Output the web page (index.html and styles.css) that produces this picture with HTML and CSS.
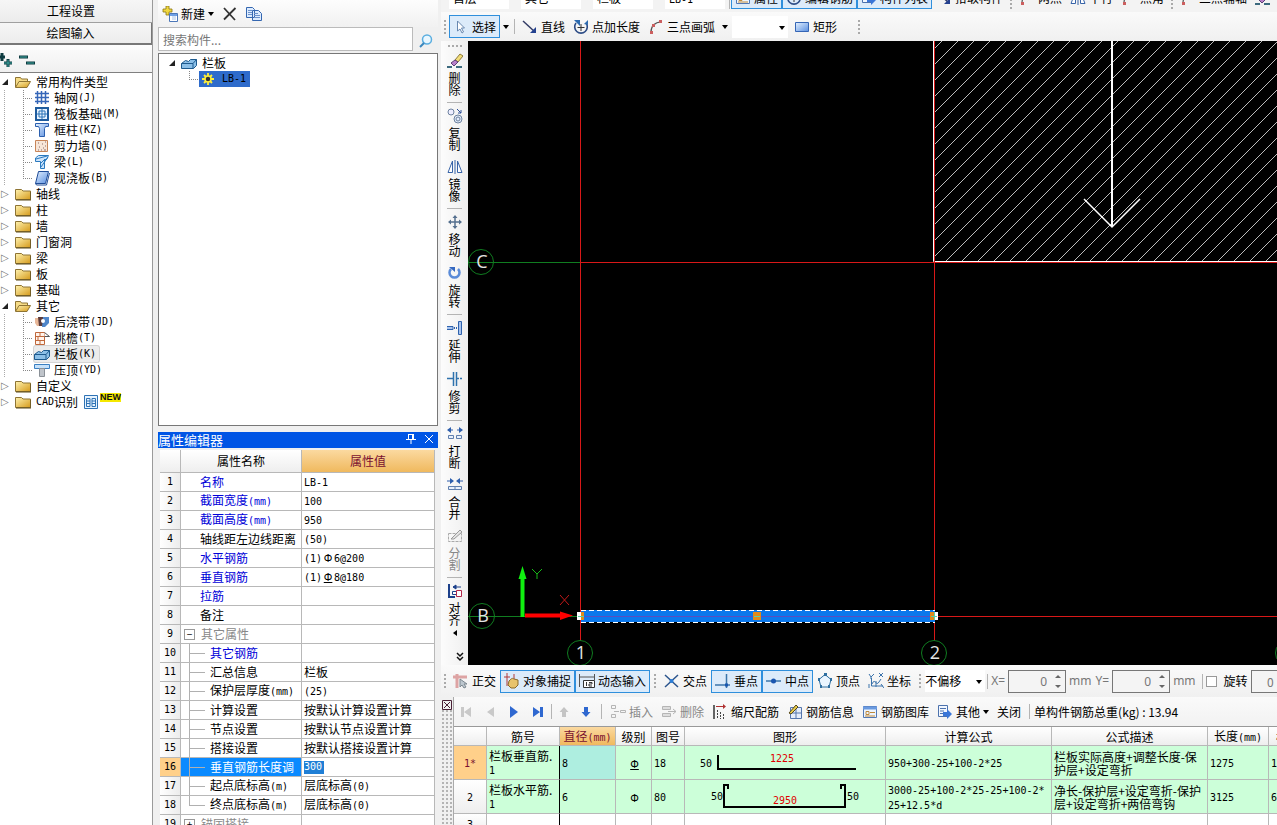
FILE: index.html
```html
<!doctype html>
<html lang="zh-CN">
  <head>
    <meta charset="UTF-8" />
    <meta name="viewport" content="width=device-width, initial-scale=1.0" />
    <title>绘图输入</title>
    <link rel="stylesheet" href="styles.css">
  </head>
  <body>
    <!-- icon sprite -->
    <svg class="sprite" width="0" height="0" aria-hidden="true">
      <defs>
        <linearGradient id="gold" x1="0" y1="0" x2="1" y2="1">
          <stop offset="0" stop-color="#fff3b0" />
          <stop offset="1" stop-color="#d59a1c" />
        </linearGradient>
        <linearGradient id="sky" x1="0" y1="0" x2="1" y2="1">
          <stop offset="0" stop-color="#e4f1ff" />
          <stop offset="1" stop-color="#5a8fe0" />
        </linearGradient>
        <symbol id="i-folder" viewBox="0 0 16 16">
          <path d="M.5 3.500h6l1.500 1.500h7.500v8.500h-15z" fill="url(#gold)" stroke="#8e7434" />
          <path d="M1 14h15V6" fill="none" stroke="#5d4a18" />
        </symbol>
        <symbol id="i-folder-open" viewBox="0 0 16 16">
          <path d="M.5 13V3.500h5l1 1.500h6v3" fill="#f6dc88" stroke="#8e7434" />
          <path d="M.5 13.500 4 7.500h11.500l-3.500 6z" fill="url(#gold)" stroke="#8e7434" />
        </symbol>
        <symbol id="i-grid" viewBox="0 0 16 16">
          <path d="M3.500 1v13M7.500 1v13M11.500 1v13M1 3.500h14M1 7.500h14M1 11.500h14" stroke="#3566b8" stroke-width="1.500" />
        </symbol>
        <symbol id="i-raft" viewBox="0 0 16 16">
          <path d="M2 2h12v12H2z" fill="#e8f3ff" stroke="#1f5c9e" stroke-width="2" />
          <path d="M5 5h6v6H5zM8 3v10M3 8h10" fill="none" stroke="#2d74b8" />
        </symbol>
        <symbol id="i-column" viewBox="0 0 16 16">
          <path d="M1.500 1.500h13v3h-3l-1 2v8h-5v-8l-1-2h-3z" fill="url(#sky)" stroke="#2b5fae" />
        </symbol>
        <symbol id="i-wall" viewBox="0 0 16 16">
          <path d="M1.500 2.500h12v11h-12z" fill="#f7e6d8" stroke="#c88558" />
          <path d="M4 5h1M8 6h1M11 4h1M5 9h1M9 10h1M11 8h1M4 12h1M7 12h1M10 12h2" stroke="#8a6a6a" />
        </symbol>
        <symbol id="i-beam" viewBox="0 0 16 16">
          <path d="m1.500 4 3-2.500h10l-2 4h-2v9h-4v-7h-5z" fill="#cfe5fb" stroke="#2b7abf" />
          <path d="m2 5 11-3M7 13l7-10M7 9l4-4" stroke="#2b7abf" />
        </symbol>
        <symbol id="i-slab" viewBox="0 0 16 16">
          <path d="M4.500 1.500h10l-3 12h-10z" fill="url(#sky)" stroke="#1f4c97" />
          <path d="m1.500 13.500 1 1.500h10l3-12" fill="none" stroke="#1f4c97" />
        </symbol>
        <symbol id="i-strip" viewBox="0 0 16 16">
          <path d="M1 4h5v8H3L1 9z" fill="#e9b99a" />
          <path d="M4 3h5v9H5z" fill="#5b3b3b" />
          <path d="M9 3h6v6l-4 4H8z" fill="#4f86c9" />
          <circle cx="9" cy="7" r="2" fill="#fff" />
        </symbol>
        <symbol id="i-eave" viewBox="0 0 16 16">
          <path d="M1.500 2.500h9v12h-9zM1.500 6.500h9M1.500 10.500h9M6 2.500v4M4 6.500v4M6 10.500v4" fill="#fff4ec" stroke="#c0683c" />
          <path d="m10.500 2.500 5 4h-5" fill="#fff" stroke="#555" />
        </symbol>
        <symbol id="i-rail" viewBox="0 0 16 16">
          <path d="m.5 8.500 4-3 3 1 2-2h6v6l-3 3h-12z" fill="#8cc0e8" stroke="#1d5a8e" />
          <path d="M.5 8.500h11.500l3.500-4M12 8.500v5" fill="none" stroke="#1d5a8e" />
        </symbol>
        <symbol id="i-coping" viewBox="0 0 16 16">
          <path d="M.5 2.500h15v4H.5z" fill="#c5e1fa" stroke="#3a7fc1" />
          <path d="M5.500 6.500h5v8h-5z" fill="#bfc4ca" stroke="#8a9097" />
        </symbol>
        <symbol id="i-cad" viewBox="0 0 16 16">
          <path d="M1.500 1.500h13v13h-13z" fill="#e8f4ff" stroke="#2f73b5" />
          <path d="M3.500 4.500h3.500v8h-3.500zM9 4.500h3.500v8H9zM3.500 7H7M9 7h3.500M3.500 9.500H7M9 9.500h3.500" fill="none" stroke="#2f73b5" />
        </symbol>
        <symbol id="i-new" viewBox="0 0 16 16">
          <path d="M4 0h3v3h3v3H7v3H4V6H1V3h3z" fill="#f1d840" stroke="#8c7712" stroke-width=".8" />
          <path d="M7.500 7.500h8v8h-8z" fill="#fff" stroke="#4c77b8" />
          <path d="M8 9h7" stroke="#6fa0e6" stroke-width="2" />
          <path d="M10 11h4M10 13h4" stroke="#a9c4ea" />
        </symbol>
        <symbol id="i-delete" viewBox="0 0 16 16">
          <path d="m2 2 11 12M13.500 2 2 13.500" stroke="#333" stroke-width="1.800" />
        </symbol>
        <symbol id="i-copy" viewBox="0 0 16 16">
          <path d="M.5 1.500h6l2 2v8h-8zM6.500 4.500h6l3 3v7h-9z" fill="#dcebff" stroke="#3567b0" />
          <path d="M2 4.500h4M2 6.500h4M2 8.500h4M8 7.500h4M8 9.500h6M8 11.500h6" stroke="#6d93cc" />
        </symbol>
        <symbol id="i-search" viewBox="0 0 16 16">
          <circle cx="9" cy="6.500" r="4.500" fill="#e9f7ff" stroke="#5aaee0" stroke-width="1.500" />
          <path d="m6 10-4 4" stroke="#3b87bd" stroke-width="2" />
        </symbol>
        <symbol id="i-gear" viewBox="0 0 16 16">
          <path d="M8 2v12M2 8h12M4 4l8 8M12 4l-8 8" stroke="#ffef3a" stroke-width="1.800" />
          <circle cx="8" cy="8" r="3" fill="#333" stroke="#ffef3a" stroke-width="1.500" />
        </symbol>
        <symbol id="i-cursor" viewBox="0 0 16 16">
          <path d="M4.500 2v10l2.500-2 2 4 1.500-1-2-4h3z" fill="#fff" stroke="#6888b0" />
        </symbol>
        <symbol id="i-line" viewBox="0 0 16 16">
          <path d="m1 2 12 11" stroke="#333c66" stroke-width="1.500" />
          <path d="M14 8v6H8z" fill="#24418f" />
        </symbol>
        <symbol id="i-length" viewBox="0 0 16 16">
          <path d="M3 4a6.300 6.300 0 1 0 10 0" fill="none" stroke="#2d4c86" stroke-width="1.600" />
          <path d="M8 5v7M4.500 8.500h7" stroke="#333" />
          <path d="M1 1h6v6zM15 1v5l-4-1z" fill="#2d6bb0" />
        </symbol>
        <symbol id="i-arc" viewBox="0 0 16 16">
          <path d="M3 13C3 7 7 3 13 3" fill="none" stroke="#555" stroke-width="1.200" />
          <path d="M2 12h3v3H2zM4 5h3v3H4zM11 1h3v3h-3z" fill="#cb5f5f" />
        </symbol>
        <symbol id="i-rect" viewBox="0 0 16 16">
          <path d="M1.500 3.500h13v9h-13z" fill="url(#sky)" stroke="#3565b5" />
        </symbol>
        <symbol id="i-erase" viewBox="0 0 16 16">
          <path d="m8 7 5-6 3 2-5 6z" fill="#f2dc78" stroke="#8d7a38" />
          <path d="m4 10 4-3 3 2-4 4z" fill="#b87fc9" stroke="#5b3f74" />
          <path d="M0 14h5M9 14h6" stroke="#3c6a7e" stroke-width="2" />
        </symbol>
        <symbol id="i-dup" viewBox="0 0 16 16">
          <circle cx="4" cy="4" r="3" fill="#eef" stroke="#6f83a0" />
          <circle cx="11" cy="11" r="4" fill="#e3ecfa" stroke="#6f83a0" />
          <circle cx="11" cy="11" r="2" fill="none" stroke="#6f83a0" />
          <path d="m10 1 4 4M14 2v3h-3" fill="none" stroke="#2d4f98" />
        </symbol>
        <symbol id="i-mirror" viewBox="0 0 16 16">
          <path d="M5.500 2v11.500H1zM10.500 2v11.500H15z" fill="#fff" stroke="#3864a8" />
          <path d="M8 1v14" stroke="#3864a8" />
        </symbol>
        <symbol id="i-move" viewBox="0 0 16 16">
          <path d="M8 2v12M2 8h12" stroke="#55708f" stroke-width="1.500" />
          <path d="m8 1 2.500 3h-5zM8 15l2.500-3h-5zM1 8l3-2.500v5zM15 8l-3-2.500v5z" fill="#55708f" />
        </symbol>
        <symbol id="i-rotate" viewBox="0 0 16 16">
          <path d="M11 4a5 5 0 1 1-7 0" fill="none" stroke="#5a8bd8" stroke-width="2.500" />
          <path d="M2 2h6v5z" fill="#3468c0" />
        </symbol>
        <symbol id="i-extend" viewBox="0 0 16 16">
          <path d="M0 6.500h6v3H0M11.500 1.500h3v13h-3z" fill="#a9c4ee" stroke="#2e62ad" />
          <path d="M7 8h4" stroke="#2e62ad" stroke-width="2" stroke-dasharray="1 1" />
        </symbol>
        <symbol id="i-trim" viewBox="0 0 16 16">
          <path d="M6.500 1v14M9.500 1v14M0 7.500h6M10 7.500h2M13 7.500h2" stroke="#2e72ad" stroke-width="1.500" />
        </symbol>
        <symbol id="i-break" viewBox="0 0 16 16">
          <path d="M1 4h5M10 4h5" stroke="#2e5fad" />
          <path d="M0 4l4-3v6zM16 4l-4-3v6z" fill="#2e5fad" />
          <path d="M1.500 9.500h5v3h-5zM9.500 9.500h5v3h-5z" fill="#e8f0fc" stroke="#5f7fae" />
        </symbol>
        <symbol id="i-merge" viewBox="0 0 16 16">
          <path d="M0 4h5M11 4h5" stroke="#2e5fad" />
          <path d="M7 4 3 1v6zM9 4l4-3v6z" fill="#2e5fad" />
          <path d="M1.500 9.500h13v3h-13zM8 9.500v3" fill="#e8f0fc" stroke="#5f7fae" />
        </symbol>
        <symbol id="i-split" viewBox="0 0 16 16">
          <path d="M1.500 5.500h13v8h-13z" fill="none" stroke="#aaa" stroke-dasharray="3 1" />
          <path d="m4 11 9-9 2 2-8 7z" fill="#e5e5e5" stroke="#999" />
        </symbol>
        <symbol id="i-align" viewBox="0 0 16 16">
          <path d="M2 1v14M2 14h6" stroke="#1d418b" stroke-width="2" />
          <path d="M5.500 8.500h4v3h-4z" fill="#fff" stroke="#1d418b" />
          <path d="M9.500 7.500h5v6h-5z" fill="#fff" stroke="#b3264a" />
          <path d="M6 4h8M6 4l3-2v4z" stroke="#1d418b" fill="#1d418b" />
        </symbol>
        <symbol id="i-ortho" viewBox="0 0 16 16">
          <path d="M4 1v14M0 4h14" stroke="#dda3a3" stroke-width="3" />
          <path d="M7 6v8l2-2 2 3 2-1-2-3h3z" fill="#bdc7cf" stroke="#7d8890" />
        </symbol>
        <symbol id="i-snap" viewBox="0 0 16 16">
          <path d="M3 0v13M0 4h6M10 1v5" stroke="#b03a3a" />
          <path d="M5 8c3-3 3-3 5-2l4 1v5l-3 3H7l-3-3z" fill="#e8c36c" stroke="#8b6a2a" />
        </symbol>
        <symbol id="i-dyn" viewBox="0 0 16 16">
          <path d="M.5 1v13M15.500 1v6M1 4h14" stroke="#555" />
          <path d="M4.500 7.500h11v7h-11z" fill="#fff" stroke="#333" />
          <path d="M7.500 9v4M10 9.500h3V11h-3v2h3" fill="none" stroke="#333" />
        </symbol>
        <symbol id="i-cross" viewBox="0 0 16 16">
          <path d="m1 2 13 12M14 2 1 14" stroke="#2b548c" stroke-width="1.500" />
          <circle cx="7.500" cy="8" r="2" fill="#2c7fd9" />
        </symbol>
        <symbol id="i-perp" viewBox="0 0 16 16">
          <path d="M0 12h15M11.500 1v14" stroke="#3b76aa" stroke-width="1.500" />
          <path d="M10 10.500h3v3h-3z" fill="#1956b0" />
        </symbol>
        <symbol id="i-mid" viewBox="0 0 16 16">
          <path d="M0 8h15" stroke="#3b76aa" stroke-width="1.500" />
          <circle cx="7.500" cy="8" r="2.500" fill="#1956b0" />
        </symbol>
        <symbol id="i-vertex" viewBox="0 0 16 16">
          <path d="m8 1.500 6 5-2 7.500H4L2 6.500z" fill="#eaf5ff" stroke="#2f6fa0" />
          <path d="M7 0h3v3H7zM1 5h2v3H1zM13 5h2v3h-2zM3 12h2v3H3zM11 12h2v3h-2z" fill="#2f6fa0" />
        </symbol>
        <symbol id="i-coord" viewBox="0 0 16 16">
          <path d="M3.500 5v8H15M4 11c3-7 4 3 7-2l2-3" fill="none" stroke="#3a72ab" />
          <path d="m1 1 2 3 3-3M3 4v2M11 0l4 4M15 0l-4 4M1 11v4M13 11l3 4M8 8v6" fill="none" stroke="#3a72ab" />
        </symbol>
        <symbol id="i-first" viewBox="0 0 16 16"><path d="M3 3h3v10H3zM13 3v10L6 8z" fill="#c9c9c9" /></symbol>
        <symbol id="i-prev" viewBox="0 0 16 16"><path d="M12 3v10L5 8z" fill="#c9c9c9" /></symbol>
        <symbol id="i-next" viewBox="0 0 16 16"><path d="M4 2v12l8-6z" fill="#2f68d0" /></symbol>
        <symbol id="i-last" viewBox="0 0 16 16"><path d="M3 3v10l7-5zM10 3h3v10h-3z" fill="#2f68d0" /></symbol>
        <symbol id="i-up" viewBox="0 0 16 16"><path d="m8 3 4.500 5H10v5H6V8H3.500z" fill="#c4c4c4" /></symbol>
        <symbol id="i-down" viewBox="0 0 16 16"><path d="m8 13 4.500-5H10V3H6v5H3.500z" fill="#2f68d0" /></symbol>
        <symbol id="i-insert" viewBox="0 0 16 16">
          <path d="M1.500 1.500h4v3h-4zM1.500 10.500h4v3h-4zM10.500 6.500h5v2h-5zM4 7.500h5" fill="none" stroke="#b5b5b5" />
        </symbol>
        <symbol id="i-remove" viewBox="0 0 16 16">
          <path d="M1.500 2.500h8v3h-8zM1.500 9.500h8v3h-8z" fill="#ddd" stroke="#b5b5b5" />
          <path d="M7 7.500h8M12 5l3 2.500-3 2.500" fill="none" stroke="#b5b5b5" />
        </symbol>
        <symbol id="i-scale" viewBox="0 0 16 16">
          <path d="M4 2.500h8" stroke="#b03030" />
          <path d="m11 0 3 2.500L11 5z" fill="#b03030" />
          <path d="M2 1v14" stroke="#333" stroke-width="1.500" />
          <path d="M5.500 6v9M8.500 8v7M11.500 10v5" stroke="#444" stroke-dasharray="2 1" />
        </symbol>
        <symbol id="i-info" viewBox="0 0 16 16">
          <path d="M3.500 3.500h11v11h-11zM3.500 9h11M9 3.500v11" fill="#e5edfb" stroke="#5576ad" />
          <path d="m2 9 7-8 2 2-7 7z" fill="#e5c94b" stroke="#584a1a" />
        </symbol>
        <symbol id="i-lib" viewBox="0 0 16 16">
          <path d="M1.500 2.500h13v11h-13z" fill="#edf5ff" stroke="#5278b4" />
          <path d="M1 4h14" stroke="#6a9ae0" stroke-width="3" />
          <path d="M4 7.500h3v3H4zM8 8.500h5M3 12h10" fill="none" stroke="#c08a3a" />
        </symbol>
        <symbol id="i-other" viewBox="0 0 16 16">
          <path d="M1.500 1.500h9v11h-9zM3 4.500h6M3 7h4M3 9.500h3" fill="#f2f7ff" stroke="#4d72ad" />
          <path d="M6 8h4V5l5 5-5 5v-3H6z" fill="#3a76d8" />
        </symbol>
        <symbol id="i-more" viewBox="0 0 16 16">
          <path d="m5 4 3 3 3-3M5 8l3 3 3-3" fill="none" stroke="#111" stroke-width="1.500" />
        </symbol>
      </defs>
    </svg>

    <div class="app">
      <aside class="nav">
        <button class="nav-tab">工程设置</button>
        <button class="nav-tab current">绘图输入</button>
        <div class="nav-tools">
          <svg width="36" height="16" aria-hidden="true">
            <path d="M-2 4h7M2 0v8M4 10h8M8 6v8M19 4h9M26 10h9" stroke="#0d3b40" stroke-width="3" />
            <path d="M4 10h8M8 7v7M20 4h7M27 10h7" stroke="#3fa7a0" />
          </svg>
        </div>
        <ul class="tree">
          <li class="open"><a href="#"><svg class="icon"><use href="#i-folder-open" /></svg>常用构件类型</a>
            <ul>
              <li><a href="#"><svg class="icon"><use href="#i-grid" /></svg>轴网<span class="n">(J)</span></a></li>
              <li><a href="#"><svg class="icon"><use href="#i-raft" /></svg>筏板基础<span class="n">(M)</span></a></li>
              <li><a href="#"><svg class="icon"><use href="#i-column" /></svg>框柱<span class="n">(KZ)</span></a></li>
              <li><a href="#"><svg class="icon"><use href="#i-wall" /></svg>剪力墙<span class="n">(Q)</span></a></li>
              <li><a href="#"><svg class="icon"><use href="#i-beam" /></svg>梁<span class="n">(L)</span></a></li>
              <li><a href="#"><svg class="icon"><use href="#i-slab" /></svg>现浇板<span class="n">(B)</span></a></li>
            </ul>
          </li>
          <li><a href="#"><svg class="icon"><use href="#i-folder" /></svg>轴线</a></li>
          <li><a href="#"><svg class="icon"><use href="#i-folder" /></svg>柱</a></li>
          <li><a href="#"><svg class="icon"><use href="#i-folder" /></svg>墙</a></li>
          <li><a href="#"><svg class="icon"><use href="#i-folder" /></svg>门窗洞</a></li>
          <li><a href="#"><svg class="icon"><use href="#i-folder" /></svg>梁</a></li>
          <li><a href="#"><svg class="icon"><use href="#i-folder" /></svg>板</a></li>
          <li><a href="#"><svg class="icon"><use href="#i-folder" /></svg>基础</a></li>
          <li class="open"><a href="#"><svg class="icon"><use href="#i-folder-open" /></svg>其它</a>
            <ul>
              <li><a href="#"><svg class="icon"><use href="#i-strip" /></svg>后浇带<span class="n">(JD)</span></a></li>
              <li><a href="#"><svg class="icon"><use href="#i-eave" /></svg>挑檐<span class="n">(T)</span></a></li>
              <li><a href="#" class="current"><svg class="icon"><use href="#i-rail" /></svg>栏板<span class="n">(K)</span></a></li>
              <li><a href="#"><svg class="icon"><use href="#i-coping" /></svg>压顶<span class="n">(YD)</span></a></li>
            </ul>
          </li>
          <li><a href="#"><svg class="icon"><use href="#i-folder" /></svg>自定义</a></li>
          <li><a href="#"><svg class="icon"><use href="#i-folder" /></svg><span class="n">CAD</span>识别<svg class="icon cad"><use href="#i-cad" /></svg><em class="new">NEW</em></a></li>
        </ul>
      </aside>

      <section class="side">
        <div class="side-tools">
          <button class="tool"><svg class="icon"><use href="#i-new" /></svg>新建<i class="caret"></i></button>
          <button class="tool" aria-label="删除"><svg class="icon"><use href="#i-delete" /></svg></button>
          <button class="tool" aria-label="复制"><svg class="icon"><use href="#i-copy" /></svg></button>
        </div>
        <div class="search">
          <input type="text" placeholder="搜索构件..." aria-label="搜索构件">
          <button aria-label="搜索"><svg class="icon"><use href="#i-search" /></svg></button>
        </div>
        <div class="members">
          <ul class="tree">
            <li class="open"><a href="#"><svg class="icon"><use href="#i-rail" /></svg>栏板</a>
              <ul>
                <li><a href="#" class="selected"><svg class="icon"><use href="#i-gear" /></svg><span class="n">LB-1</span></a></li>
              </ul>
            </li>
          </ul>
        </div>

        <div class="editor">
          <header class="editor-title">
            <h2>属性编辑器</h2>
            <button aria-label="固定"><svg width="12" height="12"><path d="M3.500 1v5M8.500 1v5M3 1.500h6M1 6.500h10M6 7v4M7.500 1v5" stroke="#fff" fill="none" /></svg></button>
            <button aria-label="关闭"><svg width="12" height="12"><path d="m2 2 8 8M10 2l-8 8" stroke="#fff" /></svg></button>
          </header>
          <table class="props">
            <colgroup><col class="p-no"><col class="p-name"><col></colgroup>
            <thead>
              <tr><th></th><th>属性名称</th><th class="hot">属性值</th></tr>
            </thead>
            <tbody>
              <tr><th>1</th><td class="link">名称</td><td><span class="n">LB-1</span></td></tr>
              <tr><th>2</th><td class="link">截面宽度<span class="n">(mm)</span></td><td><span class="n">100</span></td></tr>
              <tr><th>3</th><td class="link">截面高度<span class="n">(mm)</span></td><td><span class="n">950</span></td></tr>
              <tr><th>4</th><td>轴线距左边线距离</td><td><span class="n">(50)</span></td></tr>
              <tr><th>5</th><td class="link">水平钢筋</td><td><span class="n">(1)<b class="bar">Ф</b>6@200</span></td></tr>
              <tr><th>6</th><td class="link">垂直钢筋</td><td><span class="n">(1)<b class="bar hrb">Ф</b>8@180</span></td></tr>
              <tr><th>7</th><td class="link">拉筋</td><td></td></tr>
              <tr><th>8</th><td>备注</td><td></td></tr>
              <tr class="group"><th>9</th><td><button class="fold" aria-label="折叠">−</button>其它属性</td><td></td></tr>
              <tr class="sub"><th>10</th><td class="link">其它钢筋</td><td></td></tr>
              <tr class="sub"><th>11</th><td>汇总信息</td><td>栏板</td></tr>
              <tr class="sub"><th>12</th><td>保护层厚度<span class="n">(mm)</span></td><td><span class="n">(25)</span></td></tr>
              <tr class="sub"><th>13</th><td>计算设置</td><td>按默认计算设置计算</td></tr>
              <tr class="sub"><th>14</th><td>节点设置</td><td>按默认节点设置计算</td></tr>
              <tr class="sub"><th>15</th><td>搭接设置</td><td>按默认搭接设置计算</td></tr>
              <tr class="sub active"><th>16</th><td>垂直钢筋长度调</td><td><input type="text" value="300" aria-label="垂直钢筋长度调整"></td></tr>
              <tr class="sub"><th>17</th><td>起点底标高<span class="n">(m)</span></td><td>层底标高<span class="n">(0)</span></td></tr>
              <tr class="sub last"><th>18</th><td>终点底标高<span class="n">(m)</span></td><td>层底标高<span class="n">(0)</span></td></tr>
              <tr class="group"><th>19</th><td><button class="fold" aria-label="展开">+</button>锚固搭接</td><td></td></tr>
            </tbody>
          </table>
        </div>
      </section>

      <main class="work">
        <div class="bar-row clipped">
          <span class="combo-text">首层</span>
          <span class="combo-text">其它</span>
          <span class="combo-text">栏板</span>
          <span class="combo-text"><span class="n">LB-1</span></span>
          <i class="sep"></i>
          <button class="tool on"><svg class="icon"><use href="#i-lib" /></svg>属性</button>
          <button class="tool on"><svg class="icon"><use href="#i-length" /></svg>编辑钢筋</button>
          <button class="tool on"><svg class="icon"><use href="#i-other" /></svg>构件列表</button>
          <button class="tool"><svg class="icon"><use href="#i-line" /></svg>拾取构件</button>
          <i class="grip"></i>
          <button class="tool"><svg class="icon"><use href="#i-arc" /></svg>两点</button>
          <button class="tool"><svg class="icon"><use href="#i-mirror" /></svg>平行</button>
          <button class="tool"><svg class="icon"><use href="#i-arc" /></svg>点角</button>
          <i class="grip"></i>
          <button class="tool"><svg class="icon"><use href="#i-arc" /></svg>三点辅轴</button>
          <button class="tool" aria-label="删除辅轴"><svg class="icon"><use href="#i-erase" /></svg></button>
        </div>
        <div class="bar-row draw-tools">
          <i class="grip"></i>
          <button class="tool on"><svg class="icon"><use href="#i-cursor" /></svg>选择</button>
          <button class="drop" aria-label="更多"><i class="caret"></i></button>
          <i class="sep"></i>
          <button class="tool"><svg class="icon"><use href="#i-line" /></svg>直线</button>
          <button class="tool"><svg class="icon"><use href="#i-length" /></svg>点加长度</button>
          <button class="tool"><svg class="icon"><use href="#i-arc" /></svg>三点画弧</button>
          <button class="drop" aria-label="更多"><i class="caret"></i></button>
          <span class="combo"><select aria-label="画法"><option></option></select><i class="caret"></i></span>
          <button class="tool"><svg class="icon"><use href="#i-rect" /></svg>矩形</button>
          <i class="grip end"></i>
        </div>

        <div class="stage">
          <div class="edit-tools">
            <i class="grip-h"></i>
            <button class="vtool"><svg class="icon"><use href="#i-erase" /></svg>删除</button>
            <i class="hsep"></i>
            <button class="vtool"><svg class="icon"><use href="#i-dup" /></svg>复制</button>
            <button class="vtool"><svg class="icon"><use href="#i-mirror" /></svg>镜像</button>
            <i class="hsep"></i>
            <button class="vtool"><svg class="icon"><use href="#i-move" /></svg>移动</button>
            <button class="vtool"><svg class="icon"><use href="#i-rotate" /></svg>旋转</button>
            <i class="hsep"></i>
            <button class="vtool"><svg class="icon"><use href="#i-extend" /></svg>延伸</button>
            <button class="vtool"><svg class="icon"><use href="#i-trim" /></svg>修剪</button>
            <i class="hsep"></i>
            <button class="vtool"><svg class="icon"><use href="#i-break" /></svg>打断</button>
            <button class="vtool"><svg class="icon"><use href="#i-merge" /></svg>合并</button>
            <button class="vtool" disabled><svg class="icon"><use href="#i-split" /></svg>分割</button>
            <i class="hsep"></i>
            <button class="vtool"><svg class="icon"><use href="#i-align" /></svg>对齐</button>
            <i class="caret left"></i>
            <button class="more" aria-label="更多"><svg class="icon"><use href="#i-more" /></svg></button>
          </div>

          <svg class="canvas" role="img" aria-label="平面图">
            <defs>
              <pattern id="hatch" width="16" height="16" patternUnits="userSpaceOnUse">
                <path d="M10 0 0 10M16 10l-6 6" stroke="#bbb" shape-rendering="crispEdges" />
              </pattern>
            </defs>
            <rect x="466" y="0" width="1000" height="221" fill="url(#hatch)" />
            <g fill="none" stroke="#fff">
              <path d="M465.500 0v220.500h1000" />
              <path d="M644 0v185" stroke-width="2" />
              <path d="m616 158 28 28 28-28" stroke-width="1.500" />
            </g>
            <g fill="none" stroke="#d81818">
              <path d="M112.500 0v600M466.500 0v600M112 221.500h1400M467 575.500h1000" />
            </g>
            <g fill="none" stroke="#107c20">
              <path d="M0 221.500h112M0 575.500h112" />
              <circle cx="13" cy="221" r="12.500" />
              <circle cx="14" cy="575" r="12.500" />
              <circle cx="112" cy="612" r="12.500" />
              <circle cx="466" cy="612" r="12.500" />
              <circle cx="820" cy="612" r="12.500" />
            </g>
            <rect x="113" y="569" width="354" height="12" fill="#0b78ec" />
            <path d="M113 569.500h354M113 581.500h354" stroke="#fff" stroke-dasharray="5 3" />
            <path d="M113 575.500h354" stroke="#5a4fc0" />
            <path d="M109 571h4v8h-4zM467 571h3v8h-3z" fill="#fff" />
            <path d="M113 571h3v8h-3zM285 571h8v8h-8zM462 571h4v8h-4z" fill="#e08a1c" />
            <path d="M110 575.500h6M286 575.500h6M463 575.500h6M466.500 571v8" stroke="#58d0a8" />
            <path d="M54.500 576V536" stroke="#10f010" stroke-width="4" />
            <path d="m54.500 525 4 13h-8z" fill="#10f010" />
            <path d="M57 574.500h38" stroke="#f00" stroke-width="4" />
            <path d="m105 574.500-13-4v8.500z" fill="#f00" />
            <path d="m64 528 5 5 5-5M69 533v5" fill="none" stroke="#18b818" />
            <path d="m92 554 9 10M101 554l-9 10" stroke="#c01818" />
            <g class="axis-label">
              <text x="14" y="227">C</text>
              <text x="15" y="581">B</text>
              <text x="113" y="618">1</text>
              <text x="467" y="618">2</text>
            </g>
          </svg>
        </div>

        <div class="bar-row snap-tools">
          <i class="grip"></i>
          <button class="tool"><svg class="icon"><use href="#i-ortho" /></svg>正交</button>
          <button class="tool on"><svg class="icon"><use href="#i-snap" /></svg>对象捕捉</button>
          <button class="tool on"><svg class="icon"><use href="#i-dyn" /></svg>动态输入</button>
          <i class="grip mid"></i>
          <button class="tool"><svg class="icon"><use href="#i-cross" /></svg>交点</button>
          <button class="tool on"><svg class="icon"><use href="#i-perp" /></svg>垂点</button>
          <button class="tool on"><svg class="icon"><use href="#i-mid" /></svg>中点</button>
          <button class="tool"><svg class="icon"><use href="#i-vertex" /></svg>顶点</button>
          <button class="tool"><svg class="icon"><use href="#i-coord" /></svg>坐标</button>
          <i class="grip mid"></i>
          <span class="combo"><select aria-label="偏移方式"><option>不偏移</option></select><i class="caret"></i></span>
          <i class="sep"></i>
          <label class="coord">X=<span class="spin"><input type="text" value="0"><i></i></span>mm</label>
          <label class="coord">Y=<span class="spin"><input type="text" value="0"><i></i></span>mm</label>
          <i class="sep"></i>
          <label class="rotate"><input type="checkbox">旋转</label>
          <span class="spin angle"><input type="text" value="0" aria-label="旋转角度"><i></i></span>
        </div>

        <div class="rebar">
          <div class="dock"><button aria-label="关闭面板"><svg width="10" height="10"><path d="M.5.5h9v9h-9zM2 2l6 6M8 2 2 8" fill="none" stroke="#4a2035" /></svg></button></div>
          <div class="rebar-main">
            <div class="rebar-tools">
              <button class="tool" disabled aria-label="首条"><svg class="icon"><use href="#i-first" /></svg></button>
              <button class="tool" disabled aria-label="上一条"><svg class="icon"><use href="#i-prev" /></svg></button>
              <button class="tool" aria-label="下一条"><svg class="icon"><use href="#i-next" /></svg></button>
              <button class="tool" aria-label="末条"><svg class="icon"><use href="#i-last" /></svg></button>
              <i class="sep tight"></i>
              <button class="tool step" disabled aria-label="上移"><svg class="icon"><use href="#i-up" /></svg></button>
              <button class="tool step" aria-label="下移"><svg class="icon"><use href="#i-down" /></svg></button>
              <i class="sep"></i>
              <button class="tool" disabled><svg class="icon"><use href="#i-insert" /></svg>插入</button>
              <button class="tool" disabled><svg class="icon"><use href="#i-remove" /></svg>删除</button>
              <button class="tool"><svg class="icon"><use href="#i-scale" /></svg>缩尺配筋</button>
              <button class="tool"><svg class="icon"><use href="#i-info" /></svg>钢筋信息</button>
              <button class="tool"><svg class="icon"><use href="#i-lib" /></svg>钢筋图库</button>
              <button class="tool"><svg class="icon"><use href="#i-other" /></svg>其他<i class="caret"></i></button>
              <button class="tool">关闭</button>
              <i class="sep"></i>
              <span class="total">单构件钢筋总重(kg) : 13.94</span>
            </div>
            <div class="sheet">
              <table class="bars">
                <colgroup>
                  <col class="c-no"><col class="c-name"><col class="c-dia"><col class="c-grade"><col class="c-fig">
                  <col class="c-shape"><col class="c-formula"><col class="c-desc"><col class="c-len"><col class="c-count">
                </colgroup>
                <thead>
                  <tr>
                    <th></th><th>筋号</th><th class="hot">直径<span class="n">(mm)</span></th><th>级别</th><th>图号</th>
                    <th>图形</th><th>计算公式</th><th>公式描述</th><th>长度<span class="n">(mm)</span></th><th class="cut">根数</th>
                  </tr>
                </thead>
                <tbody>
                  <tr class="data current">
                    <th><span class="n">1*</span></th>
                    <td>栏板垂直筋.<br><span class="n">1</span></td>
                    <td class="cell-on"><span class="n">8</span></td>
                    <td class="mid"><b class="bar hrb">Ф</b></td>
                    <td><span class="n">18</span></td>
                    <td class="shape">
                      <svg width="200" height="33">
                        <path d="M33 9v14h138" fill="none" stroke="#000" stroke-width="2" />
                        <text x="15" y="21">50</text>
                        <text x="85" y="16" class="red">1225</text>
                      </svg>
                    </td>
                    <td><span class="n">950+300-25+100-2*25</span></td>
                    <td>栏板实际高度+调整长度-保<br>护层+设定弯折</td>
                    <td><span class="n">1275</span></td>
                    <td><span class="n">1</span></td>
                  </tr>
                  <tr class="data">
                    <th><span class="n">2</span></th>
                    <td>栏板水平筋.<br><span class="n">1</span></td>
                    <td><span class="n">6</span></td>
                    <td class="mid"><b class="bar">Ф</b></td>
                    <td><span class="n">80</span></td>
                    <td class="shape">
                      <svg width="200" height="33">
                        <path d="M43 9V5h-4v22h121V5h-4v4" fill="none" stroke="#000" stroke-width="2" />
                        <text x="26" y="20">50</text>
                        <text x="88" y="24" class="red">2950</text>
                        <text x="162" y="20">50</text>
                      </svg>
                    </td>
                    <td><span class="n">3000-25+100-2*25-25+100-2*<br>25+12.5*d</span></td>
                    <td>净长-保护层+设定弯折-保护<br>层+设定弯折+两倍弯钩</td>
                    <td><span class="n">3125</span></td>
                    <td><span class="n">6</span></td>
                  </tr>
                  <tr>
                    <th><span class="n">3</span></th>
                    <td></td><td></td><td></td><td></td><td></td><td></td><td></td><td></td><td></td>
                  </tr>
                </tbody>
              </table>
            </div>
          </div>
        </div>
      </main>
    </div>
  </body>
</html>
```

FILE: styles.css
```css
* {
  box-sizing: border-box;
}
body {
  margin: 0;
  background: #f0f0f0;
  color: #000;
  font-family: "Noto Sans CJK SC", "Liberation Sans", sans-serif;
  font-size: 12px;
  line-height: 16px;
}
button,
input,
select {
  font: inherit;
  color: inherit;
  margin: 0;
  padding: 0;
  border: 0;
  background: none;
}
ul {
  list-style: none;
  margin: 0;
  padding: 0;
}
a {
  color: inherit;
  text-decoration: none;
}
table {
  border-collapse: separate;
  border-spacing: 0;
  table-layout: fixed;
}
.sprite {
  position: absolute;
}
.icon {
  width: 16px;
  height: 16px;
  flex: none;
}
/* narrow latin and digits next to the chinese text */
.n {
  font-family: "DejaVu Sans Mono", monospace;
  font-size: 10px;
}
.app {
  display: flex;
  height: 100vh;
  overflow: hidden;
}

/* left navigation */
.nav {
  flex: 0 0 153px;
  display: flex;
  flex-direction: column;
  margin-right: 5px;
  border-right: 1px solid #9a9a9a;
  background: #f4f4f4;
}
.nav-tab {
  height: 23px;
  padding-right: 10px;
  border-bottom: 1px solid #a0a0a0;
  background: linear-gradient(#f6f6f6, #ececec);
}
.nav-tab.current {
  height: 22px;
  border-bottom: 2px solid #777;
  border-right: 1px solid #777;
}
.nav-tools {
  height: 27px;
  padding-top: 8px;
  background: linear-gradient(#fcfcfc, #f0f0f0);
}
.nav > .tree {
  flex: 1;
  padding-top: 1px;
  border-top: 1px solid #808080;
  background: #fff;
}

.tree > li {
  position: relative;
  padding-left: 15px;
}
.tree a {
  display: flex;
  align-items: center;
  gap: 5px;
  width: fit-content;
  height: 16px;
  white-space: nowrap;
}
.tree a .n {
  margin-left: -4px;
}
.tree > li::before {
  content: "▷";
  position: absolute;
  left: 1px;
  top: 0;
  color: #777;
  font: 10px/16px "DejaVu Sans", sans-serif;
}
.tree > li.open::before {
  content: "";
  border-bottom: 6px solid #222;
  border-left: 6px solid transparent;
  top: 5px;
  left: 2px;
}
.nav .tree > li.open {
  background: repeating-linear-gradient(#aaa 0 1px, transparent 1px 2px) 4px 16px / 1px 100% no-repeat;
}
.tree ul {
  margin-left: 8px;
}
.tree ul li {
  height: 16px;
  padding-left: 11px;
  background:
    repeating-linear-gradient(#888 0 1px, transparent 1px 2px) 0 0 / 1px 100% no-repeat,
    repeating-linear-gradient(90deg, #888 0 1px, transparent 1px 2px) 0 8px / 10px 1px no-repeat;
}
.tree ul li:last-child {
  background:
    repeating-linear-gradient(#888 0 1px, transparent 1px 2px) 0 0 / 1px 8px no-repeat,
    repeating-linear-gradient(90deg, #888 0 1px, transparent 1px 2px) 0 8px / 10px 1px no-repeat;
}
.tree ul a {
  gap: 4px;
}
.tree a.current {
  padding-right: 3px;
  border-radius: 2px;
  background: #ececec;
  box-shadow: 0 0 0 1px #d4d4d4;
}
.nav .tree a > .n:nth-child(2):not(:last-child) {
  margin: 0 -5px 0 0;
}
.new {
  align-self: flex-start;
  margin: -1px 0 0 -4px;
  color: #111;
  background: #f5e800;
  font: bold 9px/9px "Liberation Sans", sans-serif;
}

/* member list and property editor */
.side {
  flex: 0 0 280px;
  display: flex;
  flex-direction: column;
  margin-right: 3px;
}
.side-tools {
  display: flex;
  align-items: center;
  height: 27px;
  background: linear-gradient(#fdfdfd, #f1f1f1);
}
.search {
  display: flex;
  height: 26px;
}
.search input {
  flex: 1;
  min-width: 0;
  height: 24px;
  padding-left: 4px;
  border: 1px solid #bbb;
  background: #fff;
}
.search input::placeholder {
  color: #777;
}
.search button {
  width: 25px;
  padding-top: 4px;
}
.members {
  flex: 1;
  min-height: 0;
  padding: 1px 0 0 8px;
  border: 1px solid #777;
  background: #fff;
}
.members .tree > li {
  padding-left: 14px;
}
.tree a.selected {
  padding: 0 4px 0 1px;
  gap: 6px;
  background: #2e6bcb;
}
.tree a.selected .n {
  margin-left: 0;
}
.members .tree ul li {
  padding-left: 10px;
}
.editor {
  flex: 0 0 399px;
  padding-top: 6px;
  overflow: hidden;
}
.editor-title {
  display: flex;
  align-items: center;
  height: 16px;
  margin-bottom: 2px;
  color: #fff;
  background: #0055e5;
}
.editor-title h2 {
  flex: 1;
  margin: 0;
  font-size: 13px;
  font-weight: normal;
  line-height: 16px;
}
.editor-title button {
  width: 18px;
  height: 16px;
}
.props {
  width: 275px;
  margin-left: 2px;
  background: #fff;
}
.p-no {
  width: 21px;
}
.p-name {
  width: 121px;
}
.props th,
.props td {
  height: 19px;
  padding: 0 0 0 2px;
  border-right: 1px solid #b8b8b8;
  border-bottom: 1px solid #b8b8b8;
  font-weight: normal;
  line-height: 16px;
  text-align: left;
  white-space: nowrap;
  overflow: hidden;
}
.props th {
  padding: 0;
  text-align: center;
  background: linear-gradient(90deg, #fff, #ececec);
}
.props thead th {
  height: 23px;
  background: linear-gradient(#fff, #eee);
}
.props tbody th {
  font-family: "DejaVu Sans Mono", monospace;
  font-size: 10px;
}
.props thead th.hot,
.bars thead th.hot {
  color: #7a1030;
  background: linear-gradient(#fbd9a0, #f0b95e);
}
.props td:nth-child(2) {
  padding-left: 19px;
}
.props .link {
  color: #0000d8;
}
.props .group td {
  padding-left: 3px;
  color: #888;
}
.fold {
  width: 11px;
  height: 11px;
  margin-right: 6px;
  border: 1px solid #999;
  color: #000;
  font-size: 10px;
  line-height: 8px;
  vertical-align: 1px;
}
.props .sub td:nth-child(2) {
  padding-left: 29px;
  background:
    linear-gradient(#b0b0b0, #b0b0b0) 8px 0 / 1px 100% no-repeat,
    linear-gradient(#b0b0b0, #b0b0b0) 8px 9px / 16px 1px no-repeat;
}
.props .sub.last td:nth-child(2) {
  background-size: 1px 9px, 16px 1px;
}
.props .active th {
  background: #ffd08a;
}
.props .sub.active td:nth-child(2) {
  color: #fff;
  background-color: #0a8aff;
}
.props .active input {
  display: block;
  width: 20px;
  height: 13px;
  color: #fff;
  background: #1f7fd6;
  font-family: "DejaVu Sans Mono", monospace;
  font-size: 10px;
}
.bar {
  display: inline-block;
  width: 12px;
  font: 10px/10px "DejaVu Sans", sans-serif;
  text-align: center;
}
.hrb {
  text-decoration: underline;
}

/* toolbars */
.work {
  flex: 1;
  min-width: 0;
  display: flex;
  flex-direction: column;
}
.bar-row,
.rebar-tools {
  display: flex;
  align-items: center;
  white-space: nowrap;
  overflow: hidden;
}
.tool {
  flex: none;
  display: flex;
  align-items: center;
  gap: 3px;
  height: 23px;
  padding: 0 4px;
}
.tool.step {
  padding: 0 3px;
}
.tool:disabled,
.vtool:disabled {
  color: #888;
}
.tool.on {
  background: #dcebfa;
  box-shadow: inset 0 0 0 1px #2f8fdc;
}
.caret {
  flex: none;
  border: 3px solid transparent;
  border-top: 4px solid #000;
  border-bottom: 0;
}
.caret.left {
  border: 3px solid transparent;
  border-right: 4px solid #000;
  border-left: 0;
}
.drop {
  display: flex;
  justify-content: center;
  width: 11px;
}
.sep {
  flex: none;
  width: 1px;
  height: 15px;
  margin: 0 4px;
  background: #b4b4b4;
}
.sep.tight {
  margin: 0 1px;
}
.grip {
  flex: none;
  width: 2px;
  height: 14px;
  margin: 0 3px;
  background: repeating-linear-gradient(#aaa 0 2px, transparent 2px 4px);
}
.grip.mid {
  margin: 0 4px;
}
.combo {
  position: relative;
  flex: none;
  width: 56px;
  height: 22px;
  margin: 0 1px;
  background: #fff;
}
.combo select {
  width: 100%;
  height: 22px;
  appearance: none;
}
.combo .caret {
  position: absolute;
  right: 3px;
  top: 10px;
}
.clipped {
  flex: 0 0 12px;
  height: 12px;
  align-items: flex-end;
  padding: 0 0 3px 8px;
  background: #f3f3f3;
}
.clipped .combo-text {
  flex: 0 0 68px;
  height: 19px;
  margin-right: 4px;
  padding-left: 4px;
  background: linear-gradient(90deg, #fff 60px, #f3f3f3 60px);
}
.clipped .sep {
  margin: 0 1px 0 -8px;
}
.draw-tools {
  flex: 0 0 29px;
  background: linear-gradient(#fafafa, #f0f0f0);
}
.draw-tools .sep {
  margin: 0 3px;
}
.draw-tools .combo {
  margin: 0 2px;
}
.draw-tools .end {
  margin-left: 17px;
}

/* drawing area */
.stage {
  flex: 1;
  min-height: 0;
  display: flex;
}
.edit-tools {
  flex: 0 0 27px;
  display: flex;
  flex-direction: column;
  align-items: center;
  background: linear-gradient(90deg, #fcfcfc, #efefef);
}
.grip-h {
  width: 14px;
  height: 2px;
  margin: 4px 0 2px;
  background: repeating-linear-gradient(90deg, #aaa 0 2px, transparent 2px 4px);
}
.vtool {
  display: flex;
  flex-direction: column;
  align-items: center;
  gap: 3px;
  width: 20px;
  height: 51px;
  padding: 4px 4px 0;
  line-height: 12px;
  word-break: break-all;
}
.hsep {
  width: 15px;
  height: 1px;
  margin: 2px 0 1px;
  background: #b4b4b4;
}
.more {
  height: 16px;
  margin: auto 0 0 10px;
}
.canvas {
  flex: 1;
  min-width: 0;
  height: 100%;
  background: #000;
}
.axis-label {
  fill: #e4e4e4;
  font: 18px "Open Sans", "Noto Sans", sans-serif;
  text-anchor: middle;
}

/* snap bar */
.snap-tools {
  flex: 0 0 32px;
  background: linear-gradient(#fafafa, #f0f0f0);
}
.snap-tools .combo {
  width: 60px;
  margin: 0;
}
.snap-tools .sep {
  margin: 0 3px 0 2px;
}
.coord {
  display: flex;
  align-items: center;
  gap: 3px;
  margin-right: 4px;
  color: #777;
  font-family: "Noto Sans", sans-serif;
}
.spin {
  position: relative;
  flex: none;
  width: 58px;
  height: 23px;
  border: 1px solid #777;
  background: #f4f4f4;
}
.spin input {
  width: 38px;
  height: 21px;
  color: #777;
  text-align: right;
}
.spin.angle input {
  width: 22px;
}
.spin i::before,
.spin i::after {
  content: "";
  position: absolute;
  right: 4px;
  top: 4px;
  border: 3px solid transparent;
  border-bottom-color: #666;
  border-top: 0;
}
.spin i::after {
  top: 14px;
  border: 3px solid transparent;
  border-top-color: #666;
  border-bottom: 0;
}
.rotate {
  display: flex;
  align-items: center;
  gap: 7px;
  margin-right: 3px;
}
.rotate input {
  width: 11px;
  height: 11px;
  appearance: none;
  border: 1px solid #999;
  background: #fff;
}

/* rebar table */
.rebar {
  flex: 0 0 128px;
  display: flex;
  overflow: hidden;
}
.dock {
  flex: 0 0 12px;
  background: radial-gradient(circle, #b4b4b4 1px, transparent 1px) 0 0 / 4px 4px;
}
.dock button {
  display: block;
  padding: 3px 0 0 1px;
  background: #f0f0f0;
  line-height: 0;
}
.rebar-main {
  flex: 1;
  min-width: 0;
  border-left: 1px solid #aaa;
}
.rebar-tools {
  height: 29px;
  background: linear-gradient(#fafafa, #f2f2f2);
}
.sheet {
  border-top: 1px solid #999;
  overflow: hidden;
}
.bars {
  width: 875px;
  background: #fff;
}
.c-no,
.c-fig {
  width: 33px;
}
.c-name {
  width: 73px;
}
.c-dia {
  width: 56px;
}
.c-grade {
  width: 36px;
}
.c-shape {
  width: 201px;
}
.c-formula {
  width: 166px;
}
.c-desc {
  width: 156px;
}
.c-len {
  width: 61px;
}
.bars th,
.bars td {
  height: 19px;
  padding: 0 0 0 2px;
  border-right: 1px solid #b8b8b8;
  border-bottom: 1px solid #b8b8b8;
  font-weight: normal;
  line-height: 13px;
  text-align: left;
  white-space: nowrap;
}
.bars th {
  padding: 0;
  text-align: center;
  background: linear-gradient(#fff, #eee);
}
.bars th.cut {
  padding-left: 7px;
  text-align: left;
}
.bars tbody td:nth-child(2) {
  border-right-color: #000;
}
.bars .data th,
.bars .data td {
  height: 34px;
}
.bars .data td {
  background: #ccffd9;
}
.bars .current th {
  color: #7a1030;
  background: #ffd08a;
}
.bars .current .cell-on {
  background: #aeeee0;
}
.bars td.mid {
  text-align: center;
}
.bars td.shape {
  padding: 0;
}
.shape svg {
  display: block;
}
.shape text {
  font: 10px "DejaVu Sans Mono", monospace;
}
.shape .red {
  fill: #e00000;
}
```
